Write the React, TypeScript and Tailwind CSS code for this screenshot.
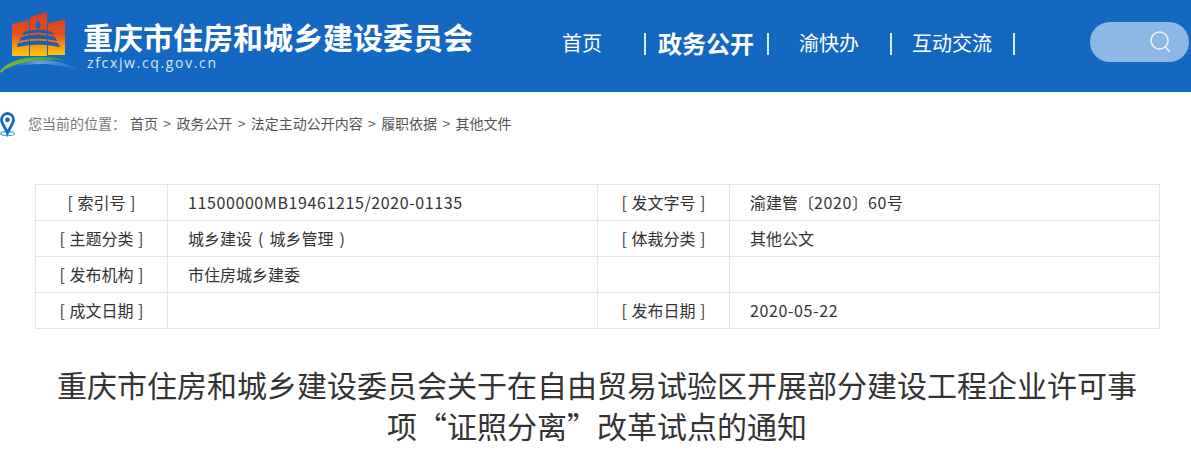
import React from 'react';

const Latin = ({ children }: { children: React.ReactNode }) => (
  <span className="tracking-[0.6px]">{children}</span>
);

const rows: React.ReactNode[][] = [
  ['[ 索引号 ]', <Latin>11500000MB19461215/2020-01135</Latin>, '[ 发文字号 ]', <>渝建管〔<Latin>2020</Latin>〕<Latin>60</Latin>号</>],
  ['[ 主题分类 ]', <>城乡建设<span className="mx-[6px]">(</span>城乡管理<span className="ml-[6px]">)</span></>, '[ 体裁分类 ]', '其他公文'],
  ['[ 发布机构 ]', '市住房城乡建委', '', ''],
  ['[ 成文日期 ]', '', '[ 发布日期 ]', <Latin>2020-05-22</Latin>],
];

const crumbs = ['首页', '政务公开', '法定主动公开内容', '履职依据', '其他文件'];

const Logo = () => (
  <svg width="80" height="66" viewBox="0 0 80 66" className="shrink-0">
    <defs>
      <linearGradient id="lg" x1="0" y1="0" x2="0" y2="1">
        <stop offset="0" stopColor="#dc3d1e" />
        <stop offset="0.5" stopColor="#e4501c" />
        <stop offset="0.8" stopColor="#f5a012" />
        <stop offset="1" stopColor="#fdc70c" />
      </linearGradient>
      <linearGradient id="sw" x1="0" y1="0" x2="1" y2="0">
        <stop offset="0" stopColor="#7fbb22" />
        <stop offset="0.7" stopColor="#55a63a" />
        <stop offset="1" stopColor="#1f7aa0" />
      </linearGradient>
      <linearGradient id="sh" x1="0" y1="0" x2="1" y2="0">
        <stop offset="0" stopColor="#1568c2" />
        <stop offset="0.4" stopColor="#6d9fd6" />
        <stop offset="1" stopColor="#1f6ec4" />
      </linearGradient>
    </defs>
    <path d="M12 13 L29 9 V45 H12 Z M30 6 L47 1 V45 H30 Z M48 12 L65 9 V44 H48 Z" fill="url(#lg)" />
    <ellipse cx="38" cy="14" rx="2.4" ry="3.8" fill="#1568c2" />
    <path d="M24 21 Q38 16 52 21 L54 24 Q38 19 22 24 Z" fill="#1a5fb0" />
    <path d="M21 26 Q38 21 55 26 L57 30 Q38 25 19 30 Z" fill="#1a5fb0" />
    <path d="M18 32 Q38 27 58 32 L60 36 Q38 31 17 36 Z" fill="#1a5fb0" />
    <path d="M29 35 H30 V45 H29 Z M47 35 H48 V45 H47 Z" fill="#1568c2" />
    <path d="M0 60 C8 50 24 46 40 46 C52 46 60 47 66 50 C50 47 22 49 4 59 L1 62 Z" fill="url(#sw)" />
    <path d="M12 56 C30 47 62 46 78 60 C60 52 35 51 12 56 Z" fill="url(#sh)" />
  </svg>
);

const Pin = () => (
  <svg width="16" height="25" viewBox="0 0 16 25" className="shrink-0">
    <ellipse cx="7.5" cy="21.5" rx="6.8" ry="2.2" fill="none" stroke="#3fa9dc" strokeWidth="1.2" />
    <path d="M7.5 1.5 C3.5 1.5 1.5 4.8 1.5 7.8 C1.5 12 5.5 15.5 7.5 21 C9.5 15.5 13.5 12 13.5 7.8 C13.5 4.8 11.5 1.5 7.5 1.5 Z" fill="#fff" stroke="#1568c2" strokeWidth="2.8" />
    <circle cx="7.5" cy="7.8" r="2.4" fill="#1568c2" />
  </svg>
);

const Sep = () => <span className="w-[2px] h-[22px] mt-[2px] shrink-0 bg-[#dcebf8]" />;

export default function App() {
  return (
    <div className="w-[1191px] h-[457px] overflow-hidden bg-white font-['Noto_Sans_CJK_SC','Liberation_Sans',sans-serif]">
      <header className="h-[92px] bg-[#1568c2] flex items-start">
        <div className="pt-[11px]">
          <Logo />
        </div>
        <div className="ml-[3px] pt-[17px] w-[457px] text-white">
          <div className="text-[30px] leading-[38px] font-bold whitespace-nowrap">重庆市住房和城乡建设委员会</div>
          <div className="pl-[4px] font-['Open_Sans',sans-serif] text-[14px] leading-[16px] tracking-[1.65px] text-[#d6e6f6]">zfcxjw.cq.gov.cn</div>
        </div>
        <nav className="flex items-center h-[86px] text-white text-[20px]">
          <span className="ml-[22px] w-[82px]">首页</span>
          <Sep />
          <span className="ml-[12px] w-[109px] text-[24px] font-bold whitespace-nowrap">政务公开</span>
          <Sep />
          <span className="ml-[30px] w-[91px]">渝快办</span>
          <Sep />
          <span className="ml-[20px] w-[101px] whitespace-nowrap">互动交流</span>
          <Sep />
        </nav>
        <div className="ml-[75px] mt-[22px] w-[99px] h-[40px] rounded-[20px] bg-[#8fb7e4] flex items-center justify-end pr-[16px]">
          <svg width="24" height="24" viewBox="0 0 24 24" fill="none" stroke="#eef4fb" strokeWidth="1.6">
            <circle cx="10.5" cy="10.5" r="8.5" />
            <path d="M16.5 17 L21 22" />
          </svg>
        </div>
      </header>

      <div className="h-[64px] flex items-center text-[14px] text-[#555]">
        <Pin />
        <span className="ml-[12px] mb-[2px] text-[#777]">您当前的位置：</span>
        <span className="ml-[4px] mb-[2px] flex">
          {crumbs.map((c, i) => (
            <React.Fragment key={c}>
              {i > 0 && <span className="mx-[5.3px]">&gt;</span>}
              <span>{c}</span>
            </React.Fragment>
          ))}
        </span>
      </div>

      <div className="mt-[28px] ml-[35px] w-[1125px] border-t border-l border-[#e5e5e5] text-[16px] text-[#333]">
        {rows.map((r, i) => (
          <div key={i} className="grid grid-cols-[132px_430px_132px_430px] h-[36px] border-b border-[#e5e5e5]">
            {r.map((c, j) => (
              <div
                key={j}
                className={`border-r border-[#e5e5e5] flex items-center pb-[2px] whitespace-pre [word-spacing:1px] ${j % 2 === 0 ? 'justify-center' : 'pl-[20px]'}`}
              >
                {c}
              </div>
            ))}
          </div>
        ))}
      </div>

      <h1 className="mt-[35px] ml-[47px] w-[1100px] text-center text-[30px] leading-[41px] font-normal text-[#333]">
        重庆市住房和城乡建设委员会关于在自由贸易试验区开展部分建设工程企业许可事项“证照分离”改革试点的通知
      </h1>
    </div>
  );
}
